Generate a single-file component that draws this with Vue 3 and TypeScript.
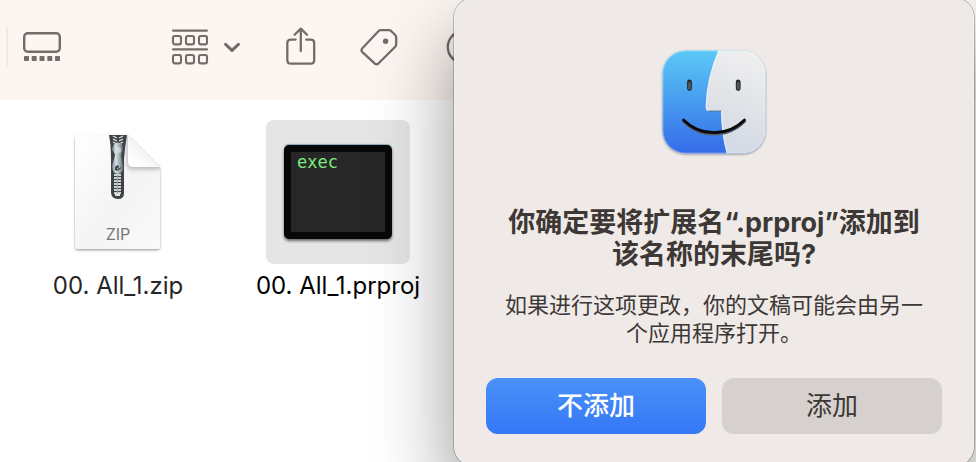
<script setup lang="ts">
import { ref } from 'vue'

const selected = ref('prproj')
const teeth: number[] = Array.from({ length: 7 }, (_, i) => 45 + i * 3)
const upperTeeth: number[] = [6, 9, 12]
</script>

<template>
  <main class="finder">
    <header class="toolbar">
      <span class="divider"></span>
      <button class="tool gallery" type="button" aria-label="画廊">
        <svg width="40" height="32" viewBox="0 0 40 32">
          <rect x="2.2" y="2.2" width="35.6" height="18.6" rx="3.6" fill="none" stroke="currentColor" stroke-width="2.4" />
          <g fill="currentColor">
            <rect x="2" y="25" width="5" height="5" rx="0.8" />
            <rect x="9.7" y="25" width="5" height="5" rx="0.8" />
            <rect x="17.5" y="25" width="5" height="5" rx="0.8" />
            <rect x="25.3" y="25" width="5" height="5" rx="0.8" />
            <rect x="33" y="25" width="5" height="5" rx="0.8" />
          </g>
        </svg>
      </button>
      <button class="tool group" type="button" aria-label="分组">
        <svg width="38" height="38" viewBox="0 0 38 38" fill="none" stroke="currentColor" stroke-width="2.1">
          <path d="M2 2.6H36M2 21.4H36" stroke-linecap="round" />
          <rect x="2" y="8" width="8" height="8.4" rx="1.8" />
          <rect x="15" y="8" width="8" height="8.4" rx="1.8" />
          <rect x="28" y="8" width="8" height="8.4" rx="1.8" />
          <rect x="2" y="27" width="8" height="8.4" rx="1.8" />
          <rect x="15" y="27" width="8" height="8.4" rx="1.8" />
          <rect x="28" y="27" width="8" height="8.4" rx="1.8" />
        </svg>
        <svg width="18" height="12" viewBox="0 0 18 12">
          <path d="M2.6 3.4L9 9.4L15.4 3.4" fill="none" stroke="currentColor" stroke-width="3.1" stroke-linecap="round" stroke-linejoin="round" />
        </svg>
      </button>
      <button class="tool share" type="button" aria-label="共享">
        <svg width="30" height="40" viewBox="0 0 30 40" fill="none" stroke="currentColor" stroke-width="2.3" stroke-linecap="round" stroke-linejoin="round">
          <path d="M9.6 12.6H4.8Q1.3 12.6 1.3 16.1V33Q1.3 36.7 5 36.7H24.6Q28.2 36.7 28.2 33V16.1Q28.2 12.6 24.8 12.6H20.2M14.8 24V1.6M8.6 7.8L14.8 1.6L21 7.8" />
        </svg>
      </button>
      <button class="tool tag" type="button" aria-label="标签">
        <svg width="38" height="38" viewBox="0 0 38 38">
          <path d="M20.2 2.2H29Q30.4 2.2 31.4 3.2L35.2 7Q36.2 8 36.2 9.4V16.2Q36.2 17.8 35 19L18.6 35.3Q16.6 37.2 14.6 35.3L2.4 24.1Q0.5 22.2 2.4 20.2L18.4 3.3Q19.2 2.2 20.2 2.2Z" fill="none" stroke="currentColor" stroke-width="2.3" stroke-linejoin="round" />
          <circle cx="25.6" cy="13.2" r="2.7" fill="currentColor" />
        </svg>
      </button>
      <button class="tool more" type="button" aria-label="更多">
        <svg width="36" height="36" viewBox="0 0 36 36">
          <circle cx="18" cy="18" r="16.2" fill="none" stroke="currentColor" stroke-width="2.4" />
        </svg>
      </button>
    </header>

    <section class="files">
      <button class="file" type="button" @click="selected = 'zip'">
        <span class="thumb" :class="{ active: selected === 'zip' }">
          <svg width="96" height="124" viewBox="0 0 96 124">
            <defs>
              <linearGradient id="paper" x1="0" y1="0" x2="1" y2="1">
                <stop offset="0" stop-color="#ffffff" />
                <stop offset="0.55" stop-color="#f4f4f4" />
                <stop offset="1" stop-color="#fafafa" />
              </linearGradient>
              <linearGradient id="fold" x1="0.2" y1="0.9" x2="0.7" y2="0.3">
                <stop offset="0" stop-color="#ffffff" />
                <stop offset="1" stop-color="#efefef" />
              </linearGradient>
              <linearGradient id="metal" x1="0" x2="1">
                <stop offset="0" stop-color="#77828a" />
                <stop offset="0.35" stop-color="#d9e0e3" />
                <stop offset="0.7" stop-color="#9ba8af" />
                <stop offset="1" stop-color="#5e686e" />
              </linearGradient>
              <clipPath id="sheet">
                <path d="M7 5H58L90 37V117Q90 121 86 121H8Q4 121 4 117V8Q4 5 7 5Z" />
              </clipPath>
              <filter id="paperShadow" x="-10%" y="-10%" width="120%" height="120%">
                <feDropShadow dx="0" dy="1.2" stdDeviation="1.1" flood-opacity="0.4" />
              </filter>
              <filter id="foldShadow" x="-20%" y="-20%" width="150%" height="150%">
                <feGaussianBlur stdDeviation="2.4" />
              </filter>
            </defs>
            <path d="M8 5H58L90 37V116Q90 119 87 119H8Q5 119 5 116V8Q5 5 8 5Z" fill="url(#paper)" filter="url(#paperShadow)" />
            <g clip-path="url(#sheet)">
              <path d="M57 3V34Q57 39 62 39H92V36L58 4Z" fill="#000" opacity="0.28" filter="url(#foldShadow)" />
            </g>
            <path d="M58 5L90 37H63Q58 37 58 32Z" fill="url(#fold)" />
            <path d="M39 5H57Q55 16 54 29V63Q54 69 48 69Q41 69 41 62V29Q41 15 39 5Z" fill="#3e4345" />
            <path v-for="y in upperTeeth" :key="'u' + y" :d="`M43 ${y}L47 ${y + 2}M53 ${y}L49 ${y + 2}`" stroke="#e1e5e6" stroke-width="1.3" />
            <path d="M44 14Q48 11 52 14L53 19L51 25L53 36Q54 43 48 44Q42 43 42 36L45 25L42 19Z" fill="url(#metal)" />
            <circle cx="48" cy="20" r="3" fill="#dfe5e7" opacity="0.6" />
            <path d="M45 37Q48 33 51 38Q48 42 45 40Z" fill="#3e464a" />
            <path d="M48 34L50 37L47 39" fill="none" stroke="#b7c2c8" stroke-width="1" />
            <path v-for="y in teeth" :key="y" :d="`M44 ${y}H51`" stroke="#dce0e1" stroke-width="1.8" />
            <path d="M47.5 45V64" stroke="#9ca3a6" stroke-width="1" />
            <path d="M45 63H50V66H45Z" fill="#dce0e1" />
            <text x="48" y="110" class="zip-text" text-anchor="middle">ZIP</text>
          </svg>
        </span>
        <span class="name">00. All_1.zip</span>
      </button>

      <button class="file current" type="button" @click="selected = 'prproj'">
        <span class="thumb" :class="{ active: selected === 'prproj' }">
          <span class="terminal">exec</span>
        </span>
        <span class="name">00. All_1.prproj</span>
      </button>
    </section>

    <section class="dialog" role="alertdialog" aria-labelledby="title" aria-describedby="detail">
      <svg class="face" width="112" height="112" viewBox="0 0 112 112">
        <defs>
          <linearGradient id="blue" x1="0" y1="0" x2="0" y2="1">
            <stop offset="0" stop-color="#5dc9f7" />
            <stop offset="0.5" stop-color="#469bef" />
            <stop offset="1" stop-color="#356be9" />
          </linearGradient>
          <linearGradient id="white" x1="0.6" y1="0" x2="0.4" y2="1">
            <stop offset="0" stop-color="#efeff0" />
            <stop offset="0.45" stop-color="#e2e4e8" />
            <stop offset="1" stop-color="#d1d9e5" />
          </linearGradient>
          <clipPath id="tile"><rect x="4.5" y="4.5" width="103" height="103" rx="23" /></clipPath>
          <filter id="tileShadow" x="-10%" y="-10%" width="120%" height="120%">
            <feDropShadow dx="0" dy="1" stdDeviation="1.3" flood-opacity="0.4" />
          </filter>
        </defs>
        <rect x="4.5" y="4.5" width="103" height="103" rx="23" fill="#d9dee6" filter="url(#tileShadow)" />
        <g clip-path="url(#tile)">
          <rect x="4" y="4" width="104" height="104" fill="url(#blue)" />
          <path d="M61 4Q49 31 48 61Q48 65 51 65H63Q63 88 69 108H108V4Z" fill="url(#white)" />
          <path d="M61 4Q49 31 48 61Q48 65 51 65" fill="none" stroke="#fff" stroke-width="1" opacity="0.8" />
          <path d="M50 65H63" stroke="#5d6675" stroke-width="1" opacity="0.75" />
          <path d="M63.5 66Q63.5 88 69 108" fill="none" stroke="#fff" stroke-width="0.8" opacity="0.7" />
        </g>
        <rect x="5" y="5" width="102" height="102" rx="22.5" fill="none" stroke="#fff" stroke-width="0.8" opacity="0.35" />
        <path d="M31.5 36V42.5M80.2 36V42.5" stroke="#25282c" stroke-width="4.8" stroke-linecap="round" />
        <path d="M31.5 37.5V42.5M80.2 37.5V42.5" stroke="#50555c" stroke-width="2.8" stroke-linecap="round" />
        <path d="M25.5 75.2Q38 88 56 88Q74 88 86.5 75.2" fill="none" stroke="#59606d" stroke-width="3" stroke-linecap="round" />
        <path d="M25.5 74Q38 86.6 56 86.6Q74 86.6 86.5 74" fill="none" stroke="#08090c" stroke-width="2.8" stroke-linecap="round" />
      </svg>
      <h1 id="title">你确定要将扩展名“.prproj”添加到<br />该名称的末尾吗?</h1>
      <p id="detail">如果进行这项更改，你的文稿可能会由另一<br />个应用程序打开。</p>
      <div class="actions">
        <button class="primary" type="button">不添加</button>
        <button class="secondary" type="button">添加</button>
      </div>
    </section>
  </main>
</template>

<style>
body {
  margin: 0;
}
</style>

<style scoped>
.finder {
  position: relative;
  min-height: 100vh;
  overflow: hidden;
  background: #fff;
  font-family: Inter, "Noto Sans CJK SC", sans-serif;
}

button {
  border: 0;
  margin: 0;
  padding: 0;
  background: none;
  font-family: inherit;
  color: inherit;
}

svg {
  display: block;
  flex: none;
}

.toolbar {
  display: flex;
  align-items: center;
  height: 100px;
  padding: 0 6px 6px;
  box-sizing: border-box;
  background: #fcf6f2;
  color: #736c69;
}

.divider {
  width: 2px;
  height: 40px;
  background: #efe9e5;
}

.tool {
  display: flex;
  align-items: center;
  flex: none;
  height: 40px;
}

.gallery {
  margin-left: 14px;
}

.group {
  margin-left: 109px;
  gap: 14px;
}

.share {
  margin-left: 45px;
}

.tag {
  margin-left: 44px;
}

.more {
  margin-left: 48px;
}

.files {
  display: flex;
  gap: 27px;
  padding: 20px 0 0 35px;
}

.file {
  display: flex;
  flex-direction: column;
  align-items: center;
  gap: 8px;
  width: 166px;
  color: #262626;
}

.current {
  width: 220px;
  color: #000;
}

.thumb {
  display: flex;
  align-items: center;
  justify-content: center;
  width: 144px;
  height: 144px;
  border-radius: 8px;
}

.thumb.active {
  background: #e5e5e5;
}

.zip-text {
  font-family: Inter, sans-serif;
  font-size: 16px;
  fill: #777;
}

.terminal {
  box-sizing: border-box;
  width: 108px;
  height: 94px;
  border: 7px solid #080808;
  border-radius: 5px;
  padding: 0 6px;
  background: #272727;
  color: #7eea7c;
  font-family: "DejaVu Sans Mono", monospace;
  font-size: 17px;
  line-height: 20px;
  text-align: left;
  box-shadow: 0 -1px 1px #8aa9b5, 0 2px 3px rgba(0, 0, 0, 0.55);
}

.name {
  font-size: 24px;
  line-height: 28px;
  white-space: nowrap;
}

.dialog {
  position: absolute;
  top: -2px;
  right: 2px;
  box-sizing: border-box;
  width: 520px;
  padding: 48px 32px 32px;
  border-radius: 20px;
  background: #efeae7;
  color: #3d3835;
  text-align: center;
  box-shadow: 0 0 0 1px rgba(0, 0, 0, 0.22), 0 40px 80px rgba(0, 0, 0, 0.42), inset 0 0 0 1px rgba(255, 255, 255, 0.3);
}

.face {
  margin: 0 auto;
}

h1 {
  margin: 49px 0 0;
  font-size: 27px;
  font-weight: 700;
  line-height: 32px;
  white-space: nowrap;
}

p {
  margin: 20px 0 0;
  font-size: 22px;
  line-height: 28px;
  white-space: nowrap;
}

.actions {
  display: grid;
  grid-template-columns: 1fr 1fr;
  gap: 16px;
  margin: 31px 0 0;
}

.actions button {
  height: 56px;
  border-radius: 12px;
  font-size: 26px;
  line-height: 32px;
}

.actions .primary {
  background: linear-gradient(#4a91f8, #3478f6);
  color: #fff;
  font-weight: 500;
}

.actions .secondary {
  background: #d6d1ce;
}
</style>
